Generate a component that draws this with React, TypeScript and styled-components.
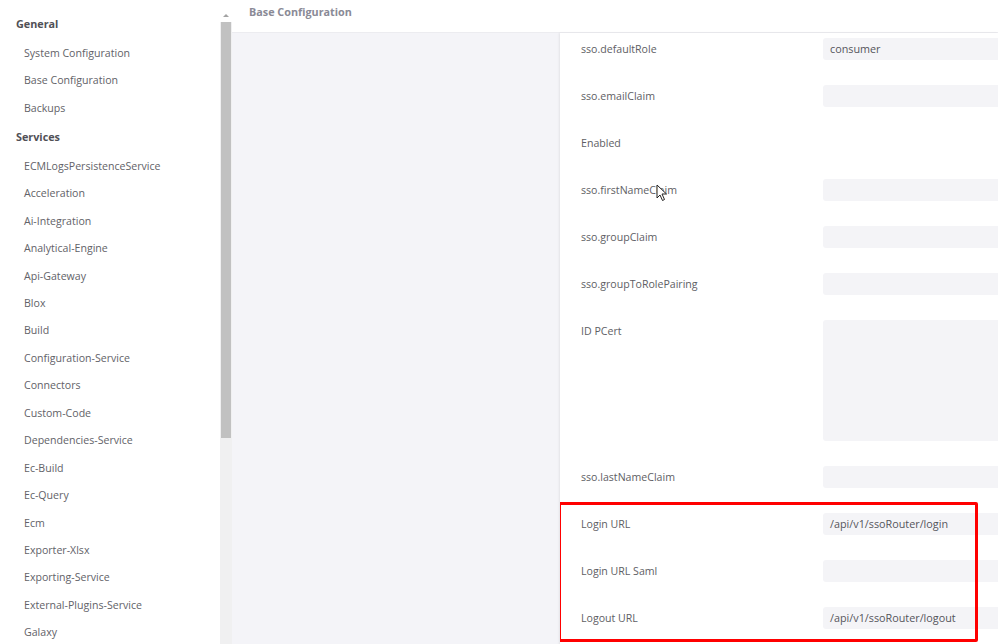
import React from "react";
import styled, { createGlobalStyle } from "styled-components";

const Global = createGlobalStyle`
  html, body { margin: 0; padding: 0; background: #f4f4f8; overflow: hidden; }
  body { font-family: "Open Sans", "Liberation Sans", sans-serif; }
  * { box-sizing: border-box; }
`;

const Page = styled.div`
  display: flex;
  width: 998px;
  height: 644px;
  overflow: hidden;
`;

const Sidebar = styled.aside`
  display: flex;
  width: 232px;
  flex-shrink: 0;
  background: #ffffff;
`;

const NavList = styled.nav`
  width: 220px;
  padding-top: 13px;
  overflow: hidden;
`;

const NavHeading = styled.div<{ $first?: boolean }>`
  font-size: 10.8px;
  font-weight: 700;
  color: #505056;
  line-height: 22px;
  padding-left: 16px;
  margin: ${(p) => (p.$first ? "0 0 5px" : "4px 0 4.5px")};
`;

const NavItem = styled.div`
  font-size: 10.6px;
  color: #626268;
  line-height: 27.45px;
  height: 27.45px;
  padding-left: 24px;
  white-space: nowrap;
`;

const ScrollTrack = styled.div`
  width: 12px;
  display: flex;
  flex-direction: column;
  align-items: center;
  background: #f0f0f1;
`;

const ScrollButton = styled.div`
  width: 12px;
  height: 22px;
  background: #ffffff;
  display: flex;
  align-items: center;
  justify-content: center;
  padding-top: 8px;
`;

const ArrowUp = styled.div`
  width: 0;
  height: 0;
  border-left: 3px solid transparent;
  border-right: 3px solid transparent;
  border-bottom: 3px solid #a3a3a3;
`;

const ScrollThumb = styled.div`
  width: 10px;
  height: 416px;
  background: #c1c1c1;
`;

const Main = styled.main`
  flex: 1;
  display: flex;
  flex-direction: column;
  min-width: 0;
`;

const Header = styled.header`
  height: 33px;
  background: #ffffff;
  border-bottom: 1px solid #ececf0;
  padding: 4px 0 0 17px;
  font-size: 10.8px;
  font-weight: 700;
  color: #8a8a96;
  line-height: 16px;
  flex-shrink: 0;
`;

const Body = styled.div`
  flex: 1;
  display: flex;
  background: #f4f4f8;
`;

const Spacer = styled.div`
  width: 328px;
  flex-shrink: 0;
`;

const Card = styled.section`
  position: relative;
  flex: 1;
  background: #ffffff;
  box-shadow: -1px 0 2px rgba(0, 0, 0, 0.07);
  padding-top: 5px;
  overflow: hidden;
`;

const Row = styled.div`
  display: grid;
  grid-template-columns: 263px 220px;
  align-items: start;
  padding-bottom: 25px;
`;

const Label = styled.div`
  font-size: 10.6px;
  color: #5e5e64;
  line-height: 21px;
  padding: 1px 0 0 21px;
  white-space: nowrap;
`;

const Field = styled.div<{ $tall?: boolean }>`
  height: ${(p) => (p.$tall ? "121px" : "22px")};
  background: #f4f4f7;
  border-radius: 3px;
  font-size: 10.8px;
  color: #55555b;
  line-height: 22px;
  padding-left: 7px;
  white-space: nowrap;
`;

const Blank = styled.div`
  height: 22px;
`;

const Highlight = styled.div`
  position: relative;
`;

const RedBox = styled.div`
  position: absolute;
  left: -2px;
  top: -11px;
  width: 420px;
  height: 140px;
  border: 3px solid #ff0000;
  border-radius: 2px;
  pointer-events: none;
`;

const Cursor = styled.svg`
  position: absolute;
  left: 96px;
  top: 151px;
`;

type FieldRow = { label: string; value?: string; kind?: "input" | "tall" | "none" };

const rows: FieldRow[] = [
  { label: "sso.defaultRole", value: "consumer" },
  { label: "sso.emailClaim" },
  { label: "Enabled", kind: "none" },
  { label: "sso.firstNameClaim" },
  { label: "sso.groupClaim" },
  { label: "sso.groupToRolePairing" },
  { label: "ID PCert", kind: "tall" },
  { label: "sso.lastNameClaim" },
];

const highlighted: FieldRow[] = [
  { label: "Login URL", value: "/api/v1/ssoRouter/login" },
  { label: "Login URL Saml" },
  { label: "Logout URL", value: "/api/v1/ssoRouter/logout" },
];

const general = ["System Configuration", "Base Configuration", "Backups"];
const services = [
  "ECMLogsPersistenceService",
  "Acceleration",
  "Ai-Integration",
  "Analytical-Engine",
  "Api-Gateway",
  "Blox",
  "Build",
  "Configuration-Service",
  "Connectors",
  "Custom-Code",
  "Dependencies-Service",
  "Ec-Build",
  "Ec-Query",
  "Ecm",
  "Exporter-Xlsx",
  "Exporting-Service",
  "External-Plugins-Service",
  "Galaxy",
];

function renderRow(r: FieldRow) {
  return (
    <Row key={r.label}>
      <Label>{r.label}</Label>
      {r.kind === "none" ? (
        <Blank />
      ) : (
        <Field $tall={r.kind === "tall"}>{r.value ?? ""}</Field>
      )}
    </Row>
  );
}

export default function App() {
  return (
    <>
      <Global />
      <Page>
        <Sidebar>
          <NavList>
            <NavHeading $first>General</NavHeading>
            {general.map((g) => (
              <NavItem key={g}>{g}</NavItem>
            ))}
            <NavHeading>Services</NavHeading>
            {services.map((s) => (
              <NavItem key={s}>{s}</NavItem>
            ))}
          </NavList>
          <ScrollTrack>
            <ScrollButton>
              <ArrowUp />
            </ScrollButton>
            <ScrollThumb />
          </ScrollTrack>
        </Sidebar>
        <Main>
          <Header>Base Configuration</Header>
          <Body>
            <Spacer />
            <Card>
              {rows.map(renderRow)}
              <Highlight>
                {highlighted.map(renderRow)}
                <RedBox />
              </Highlight>
              <Cursor width="12" height="18" viewBox="0 0 12 18">
                <path
                  d="M1 1 L1 14 L4 11 L6.5 16.5 L8.5 15.5 L6 10 L10.5 10 Z"
                  fill="#ffffff"
                  stroke="#222"
                  strokeWidth="1"
                  strokeLinejoin="round"
                />
              </Cursor>
            </Card>
          </Body>
        </Main>
      </Page>
    </>
  );
}
